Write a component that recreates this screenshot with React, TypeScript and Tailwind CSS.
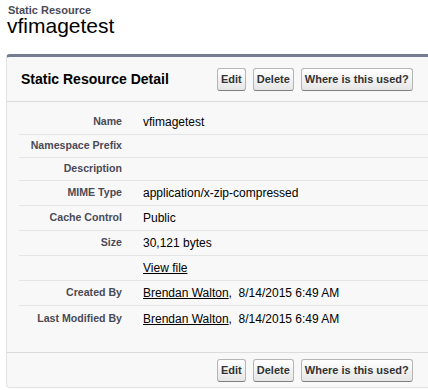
import React from "react";

const font = { fontFamily: '"Liberation Sans", Arial, sans-serif' };

function Btn({ children }: { children: React.ReactNode }) {
  return (
    <button className="h-[23px] px-[3px] border border-[#b5b5b5] border-b-[#7f7f7f] rounded-[3px] bg-gradient-to-b from-white to-[#e6e6e7] text-[11px] leading-[13px] font-bold text-[#333]">
      {children}
    </button>
  );
}

function Buttons() {
  return (
    <div className="flex gap-[7px]">
      <Btn>Edit</Btn>
      <Btn>Delete</Btn>
      <Btn>Where is this used?</Btn>
    </div>
  );
}

type Row = { label: string; value?: React.ReactNode; h: string; last?: boolean };

function Link({ children }: { children: React.ReactNode }) {
  return <span className="underline text-black">{children}</span>;
}

export default function App() {
  const rows: Row[] = [
    { label: "Name", value: "vfimagetest", h: "h-[25px]" },
    { label: "Namespace Prefix", h: "h-[23px]" },
    { label: "Description", h: "h-[23px]" },
    { label: "MIME Type", value: "application/x-zip-compressed", h: "h-[25px]" },
    { label: "Cache Control", value: "Public", h: "h-[25px]" },
    { label: "Size", value: "30,121 bytes", h: "h-[25px]" },
    { label: "", value: <Link>View file</Link>, h: "h-[25px]" },
    {
      label: "Created By",
      value: (
        <>
          <Link>Brendan Walton</Link>,&nbsp; 8/14/2015 6:49 AM
        </>
      ),
      h: "h-[25px]",
    },
    {
      label: "Last Modified By",
      value: (
        <>
          <Link>Brendan Walton</Link>,&nbsp; 8/14/2015 6:49 AM
        </>
      ),
      h: "h-[25px]",
      last: true,
    },
  ];

  return (
    <div className="w-[428px] h-[390px] overflow-hidden bg-white" style={font}>
      <div className="pt-[5px] pl-[8px]">
        <div className="text-[11px] leading-[11px] font-bold text-[#4a4a56]">Static Resource</div>
        <div className="text-[21px] leading-[20px] text-black -ml-[1px]">vfimagetest</div>
      </div>
      <div className="mt-[18px] ml-[6px] w-[440px] bg-[#f8f8f8] border border-[#e0e3e5] border-t-[3px] border-t-[#747c92] rounded-[4px]">
        <div className="h-[45px] flex items-center border-b border-[#dbdbdb]">
          <div className="w-[210px] pl-[14px] text-[14px] font-bold text-black">Static Resource Detail</div>
          <Buttons />
        </div>
        <div className="pt-[8px] pl-[12px] pb-[21px]">
          {rows.map((r, i) => (
            <div
              key={i}
              className={`flex items-center ${r.h} ${r.last ? "" : "border-b border-[#e5e5e5]"}`}
            >
              <div className="w-[113px] pr-[10px] text-right text-[10.6px] font-bold text-[#4a4a56] whitespace-nowrap">
                {r.label}
              </div>
              <div className="pl-[11px] text-[12px] text-black whitespace-nowrap">{r.value}</div>
            </div>
          ))}
        </div>
        <div className="h-[35px] flex items-center border-t border-[#dbdbdb]">
          <div className="w-[210px]" />
          <Buttons />
        </div>
      </div>
    </div>
  );
}
